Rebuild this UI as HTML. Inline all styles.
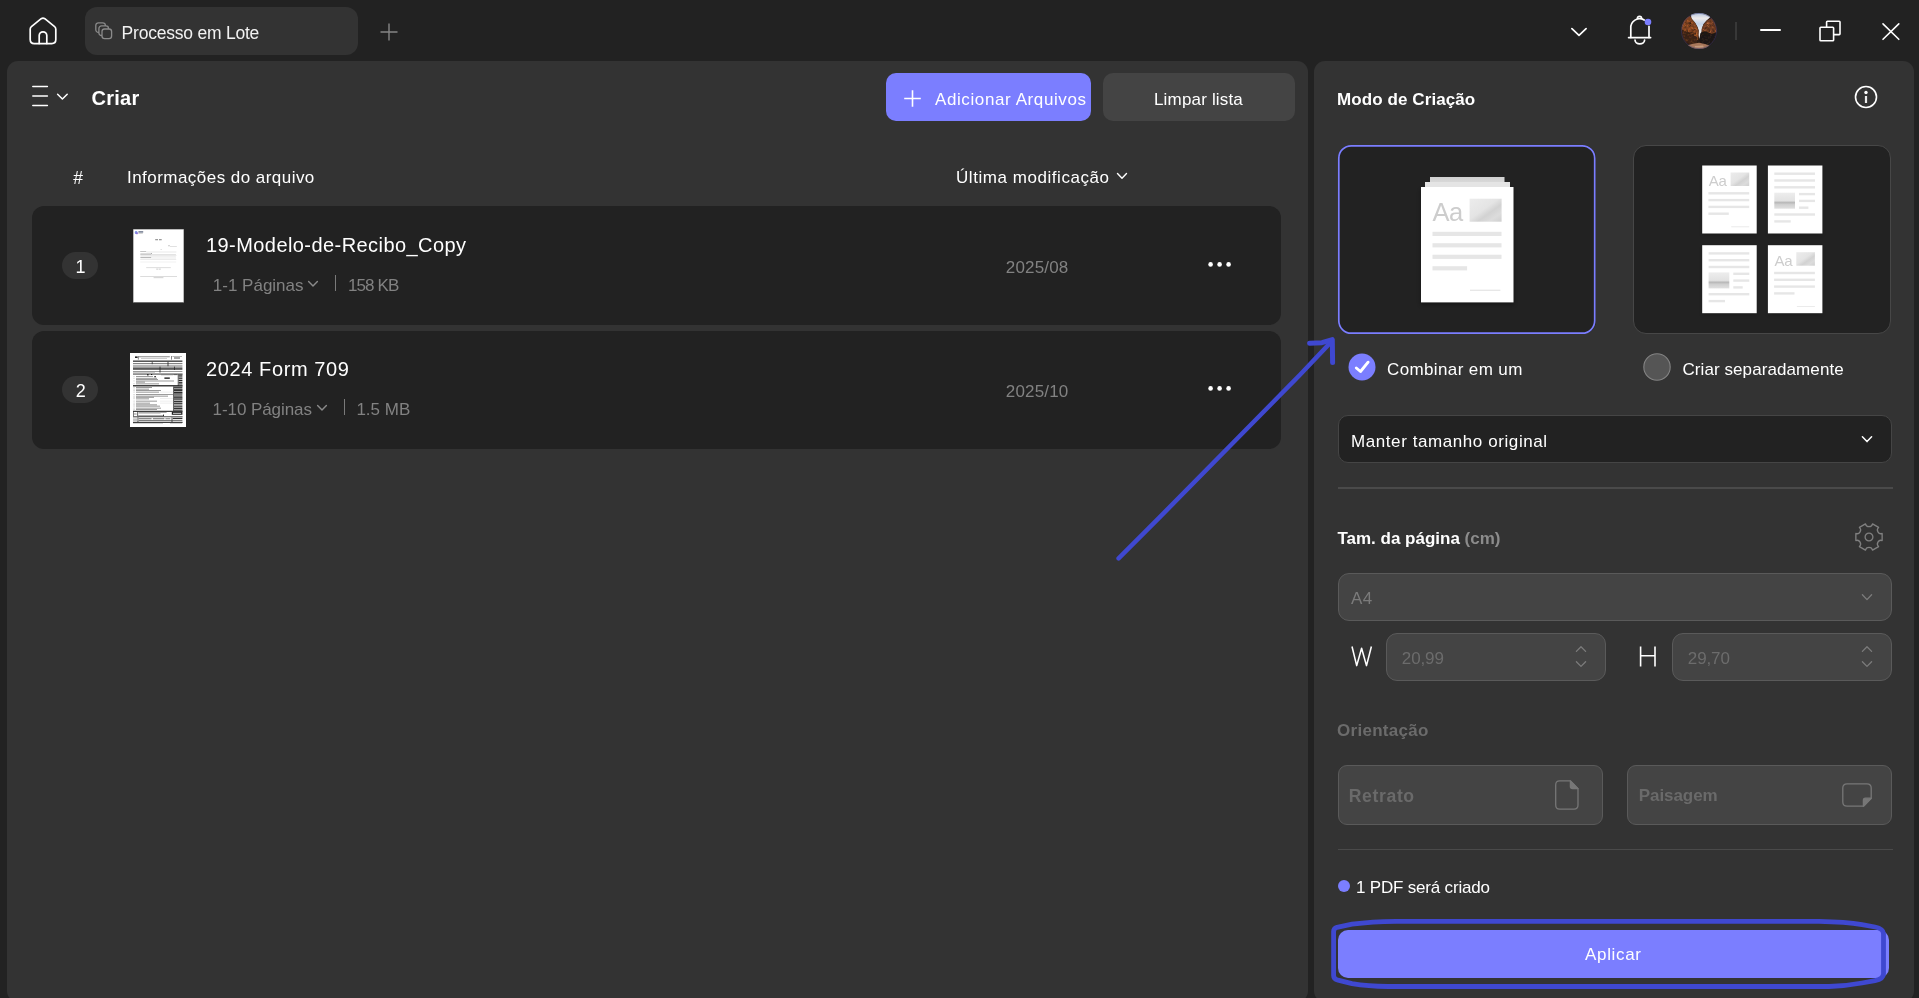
<!DOCTYPE html>
<html lang="pt">
<head>
<meta charset="utf-8">
<title>Processo em Lote</title>
<style>
*{box-sizing:border-box;margin:0;padding:0}
html,body{width:1919px;height:998px;overflow:hidden;background:#222222}
body{font-family:"Liberation Sans",sans-serif;color:#fff;position:relative;font-size:17px}
.abs{position:absolute}
.t{position:absolute;white-space:nowrap;line-height:20px;height:20px}
.b{font-weight:bold}
svg{position:absolute;overflow:visible}
/* top bar */
#tab{left:85px;top:7px;width:273px;height:47.7px;background:#333333;border-radius:12px}
/* panels */
#left{left:7px;top:60.8px;width:1300.7px;height:941.5px;background:#333333;border-radius:11px}
#right{left:1314px;top:60.8px;width:599.5px;height:941.5px;background:#333333;border-radius:11px}
.btn{border-radius:10px}
#add{left:886.2px;top:73px;width:205.2px;height:48px;background:#7b7eff}
#clear{left:1103.4px;top:73px;width:191.8px;height:48px;background:#444444}
.row{left:32.2px;width:1248.8px;height:118.6px;background:#222222;border-radius:12px}
.badge{left:62.2px;width:36px;height:27px;border-radius:13.5px;background:#333333}
.gray{color:#828282}
.card{width:257.5px;height:189px;background:#222222;border-radius:13px}
.dis{background:#444444;border:1px solid #5a5a5a;border-radius:11px}
.hr{height:2px;background:#4a4a4a;left:1338px;width:555px}
</style>
</head>
<body><div id="wrap" style="position:absolute;left:0;top:0;width:1919px;height:998px;will-change:transform">
<!-- TOP BAR -->
<div id="tab" class="abs"></div>
<div class="t" style="left:121.6px;top:23.4px;color:#f2f2f2;font-size:17.5px;letter-spacing:-.22px">Processo em Lote</div>


<!-- home -->
<svg style="left:29px;top:17px" width="28" height="28" viewBox="0 0 28 28" fill="none" stroke="#fff" stroke-width="1.7" stroke-linejoin="round" stroke-linecap="round">
<path d="M1.2 12.2 Q1.2 10.6 2.4 9.6 L12.2 1.7 Q14 0.4 15.8 1.7 L25.6 9.6 Q26.8 10.6 26.8 12.2 V22.6 Q26.8 26.6 22.8 26.6 H5.2 Q1.2 26.6 1.2 22.6 Z"/>
<path d="M10.2 26.4 V18.6 A3.8 3.8 0 0 1 17.8 18.6 V26.4"/>
</svg>
<!-- stack icon -->
<svg style="left:95px;top:22px" width="18" height="18" viewBox="0 0 18 18" fill="#333333" stroke="#8a8a8a" stroke-width="1.3">
<rect x="0.8" y="0.8" width="9.6" height="9.6" rx="2.6"/>
<rect x="3.9" y="3.9" width="9.6" height="9.6" rx="2.6"/>
<rect x="7" y="7" width="9.6" height="9.6" rx="2.6"/>
</svg>
<!-- plus tab -->
<svg style="left:380.2px;top:22.6px" width="18" height="18" viewBox="0 0 18 18" fill="none" stroke="#858585" stroke-width="1.4"><path d="M9 0.5V17.5M0.5 9H17.5"/></svg>
<!-- chevron down top -->
<svg style="left:1570px;top:26px" width="18" height="12" viewBox="0 0 18 12" fill="none" stroke="#fff" stroke-width="1.7" stroke-linecap="round" stroke-linejoin="round"><path d="M1.9 2.7 L9 9.3 L16.1 2.7"/></svg>
<!-- bell -->
<svg style="left:1626px;top:14px" width="28" height="32" viewBox="0 0 28 32" fill="none" stroke="#fff" stroke-width="1.7" stroke-linecap="round">
<path d="M2.6 23.6 H24.6"/>
<path d="M4.8 23.4 V14.4 A8.9 8.9 0 0 1 18.2 6.0"/>
<path d="M23 12.4 V23.4"/>
<path d="M11.4 4.4 A2.1 2.1 0 0 1 15.6 4.4"/>
<path d="M9 26 A4.8 3.9 0 0 0 18.6 26"/>
<circle cx="22" cy="8" r="3.3" fill="#7b7eff" stroke="none"/>
</svg>
<!-- avatar -->
<svg style="left:1681px;top:13px" width="36" height="36" viewBox="0 0 36 36">
<defs><clipPath id="av"><circle cx="18" cy="18" r="18"/></clipPath>
<linearGradient id="sky" x1="0" y1="0" x2="0" y2="1"><stop offset="0" stop-color="#b4c4dc"/><stop offset="0.2" stop-color="#eeeaea"/><stop offset="0.42" stop-color="#c3d2e8"/><stop offset="0.7" stop-color="#f0eeee"/><stop offset="1" stop-color="#e6e0dc"/></linearGradient>
<filter id="avn" x="0" y="0" width="100%" height="100%"><feTurbulence type="fractalNoise" baseFrequency="0.42" numOctaves="2" seed="11" result="n"/><feColorMatrix in="n" type="matrix" values="0 0 0 0 0  0 0 0 0 0  0 0 0 0 0  2.4 0 0 0 -1.15" result="a"/><feComposite in="SourceGraphic" in2="a" operator="in"/></filter>
<filter id="avb"><feGaussianBlur stdDeviation="0.55"/></filter>
</defs>
<g clip-path="url(#av)">
<rect width="36" height="36" fill="#2a1b14"/>
<g filter="url(#avb)">
<path d="M9.6 0 H30 L29 4.5 L25.5 7.5 L22.5 11 L21 15.5 L20.4 19 L19 22.5 L18.4 26 L17.4 22 L17.8 17.5 L16.6 14 L14 9.5 L10.5 5.5 Z" fill="url(#sky)"/>
<path d="M2 9 L6 4 L9 3 L11.5 7 L14.5 10.5 L16.4 14.5 L17.6 18 L17.4 23 L17 27 L14 27 L6 20 L0.5 17 Z" fill="#7d4320"/>
<path d="M31 5 L33.5 9 L35.6 15 L35.5 20 L30 22 L25 18 L21 19 L20.6 16 L22.5 11.5 L26 7.5 Z" fill="#6e3b22"/>
<path d="M0 16 L6 19 L13 21 L16.5 25 L16 31 L8 31 L2 26 Z" fill="#3a2115"/>
<path d="M19.5 20 L25 18.5 L31 21 L36 19 L35 27 L30 33 L21 32 L18.6 27 Z" fill="#1c1613"/>
<path d="M6.5 32.2 L12 30.8 L18 29.8 L24 31 L28.5 32.6 L25 36 H11 Z" fill="#a8775a"/>
<path d="M14 33 L22 32.6 L23 34.4 L13.4 34.6Z" fill="#c49a7e"/>
</g>
<g filter="url(#avn)">
<path d="M1 9 L7.5 4.5 L12.5 10 L15.8 15 L17 21 L17 27 L8 24 L0 18 Z" fill="#cf6c2c"/>
<path d="M31.5 6.5 L36 14 L34 21 L24 18.5 L21.4 17.5 L23 12.5 L27 8.5 Z" fill="#c06a3c"/>
<path d="M0 16 L16 24 L16 31 L4 29 Z" fill="#6b3a1c"/>
<path d="M20 21 L35 20 L31 32 L21 31 Z" fill="#3d2a1e"/>
</g>
<g filter="url(#avn)" transform="translate(36,0) scale(-1,1)">
<path d="M0 8 L5 6.5 L12.5 14 L15 22 L6 22 L0 18 Z" fill="#2c1a12" opacity=".95"/>
<path d="M23 11 L30 5 L35 16 L30 24 L19.4 22 Z" fill="#2e1a10" opacity=".95"/>
</g>
</g>
<circle cx="18" cy="18" r="17.6" fill="none" stroke="#3b3f78" stroke-width=".7" opacity=".7"/>
</svg>
<div class="abs" style="left:1735px;top:22px;width:2px;height:18px;background:#383838"></div>
<!-- minimize -->
<div class="abs" style="left:1760px;top:29.1px;width:20.6px;height:1.7px;background:#fff;border-radius:1px"></div>
<!-- restore -->
<svg style="left:1818px;top:19px" width="24" height="24" viewBox="0 0 24 24" fill="#222222" stroke="#fff" stroke-width="1.6" stroke-linejoin="round">
<rect x="8.6" y="2.2" width="13.4" height="13.4" rx="0.8"/>
<rect x="2" y="8.2" width="13.6" height="13.6" rx="0.8"/>
</svg>
<!-- close -->
<svg style="left:1881px;top:22px" width="20" height="19" viewBox="0 0 20 19" fill="none" stroke="#fff" stroke-width="1.6" stroke-linecap="round"><path d="M2 1.9 L17.8 17.3 M17.8 1.9 L2 17.3"/></svg>

<!-- PANELS -->
<div id="left" class="abs"></div>
<div id="right" class="abs"></div>

<!-- LEFT HEADER -->
<div class="t b" style="left:91.4px;top:87.4px;font-size:20px;line-height:22px;height:22px;letter-spacing:.3px">Criar</div>
<div id="add" class="abs btn"></div>
<div class="t" style="left:935px;top:89.8px;letter-spacing:.6px">Adicionar Arquivos</div>
<div id="clear" class="abs btn"></div>
<div class="t" style="left:1154px;top:89.8px;letter-spacing:.17px">Limpar lista</div>

<div class="t" style="left:73.2px;top:167.8px;font-size:17.5px">#</div>
<div class="t" style="left:127px;top:167.7px;letter-spacing:.46px">Informações do arquivo</div>
<div class="t" style="left:956px;top:167.7px;letter-spacing:.55px">Última modificação</div>


<!-- menu icon -->
<svg style="left:32px;top:85px" width="38" height="22" viewBox="0 0 38 22" fill="none" stroke="#fff" stroke-width="1.5" stroke-linecap="round">
<path d="M0.8 1.6 H15.4 M0.8 11 H15.4 M0.8 20.4 H15.4"/>
<path d="M25.6 9.2 L30.4 14 L35.2 9.2" stroke-linejoin="round"/>
</svg>
<!-- plus in add button -->
<svg style="left:904px;top:90px" width="17" height="17" viewBox="0 0 17 17" fill="none" stroke="#fff" stroke-width="1.6"><path d="M8.5 0.2V16.8M0.2 8.5H16.8"/></svg>
<!-- chevron ultima -->
<svg style="left:1116.2px;top:171.6px" width="12" height="8" viewBox="0 0 12 8" fill="none" stroke="#fff" stroke-width="1.4" stroke-linecap="round" stroke-linejoin="round"><path d="M1.5 1.6 L6 6.2 L10.5 1.6"/></svg>

<!-- ROWS -->
<div class="abs row" style="top:206px"></div>
<div class="abs row" style="top:330.6px;height:118.7px"></div>
<div class="abs badge" style="top:251.5px"></div>
<div class="abs badge" style="top:376px"></div>
<div class="t" style="left:75.4px;top:256.8px;font-size:18px">1</div>
<div class="t" style="left:75.8px;top:381.2px;font-size:18px">2</div>
<svg style="left:133px;top:229px" width="51" height="74" viewBox="0 0 51 74">
<rect x="0" y="0" width="51" height="73.5" fill="#fff"/>
<rect x="0.25" y="0.25" width="50.5" height="73" fill="none" stroke="#1a1a1a" stroke-width="0.5" opacity=".6"/>
<rect x="1.8" y="1.9" width="2.6" height="3" rx="1.2" fill="#6f8be0" opacity=".9"/>
<rect x="2.6" y="3.2" width="2.6" height="2" rx="1" fill="#8a6ad8" opacity=".8"/>
<rect x="5.4" y="2.2" width="4.8" height="1.4" fill="#44506a" opacity=".8"/>
<rect x="5.4" y="4" width="4.4" height=".7" fill="#999" opacity=".6"/>
<rect x="22.2" y="10.3" width="2.8" height=".9" fill="#333" opacity=".7"/><rect x="26" y="10.3" width="2.7" height=".9" fill="#333" opacity=".7"/>
<rect x="35.2" y="16.4" width="1.6" height=".8" fill="#888" opacity=".7"/><rect x="37" y="17.3" width="6.8" height=".45" fill="#aaa" opacity=".8"/>
<rect x="27.5" y="20.4" width="1.4" height=".6" fill="#aaa" opacity=".6"/>
<rect x="7.2" y="22.2" width="6" height=".8" fill="#999" opacity=".7"/><rect x="13.4" y="22.8" width="30" height=".4" fill="#c8c8c8"/>
<rect x="7.4" y="24.6" width="10.6" height=".9" fill="#888" opacity=".75"/><rect x="18" y="24" width="1" height="1" fill="#777" opacity=".6"/><rect x="7.4" y="25.6" width="35.6" height=".4" fill="#c4c4c4"/>
<path d="M7.4 26.2 H42.6 Q43.6 26.7 42.6 27.2 H7.4" fill="none" stroke="#c8c8c8" stroke-width=".4"/>
<rect x="7.4" y="28.2" width="10.8" height=".9" fill="#888" opacity=".75"/><rect x="18.4" y="28.8" width="24.6" height=".4" fill="#c8c8c8"/>
<rect x="7.2" y="30.4" width="36" height=".45" fill="#d2d2d2"/>
<rect x="7.2" y="32.8" width="36" height=".4" fill="#dcdcdc"/>
<rect x="13.2" y="38.6" width="24.6" height=".45" fill="#b4b4b4"/>
<rect x="23.2" y="39.7" width="2" height=".8" fill="#999" opacity=".6"/><rect x="25.8" y="39.7" width="2" height=".8" fill="#999" opacity=".6"/>
<rect x="7.2" y="47.5" width="36.8" height=".45" fill="#b0b0b0"/>
<rect x="20.6" y="48.4" width="9.8" height=".7" fill="#999" opacity=".65"/>
</svg>
<svg style="left:130px;top:353px" width="56" height="74" viewBox="0 0 56 74"><rect x="0" y="0" width="56" height="74" fill="#fff"/><rect x="5.0" y="3.4" width="2.6" height="1.6" fill="#222"/><rect x="7.9" y="3.0" width="0.6" height="3.6" fill="#333"/><rect x="8.8" y="3.4" width="31.0" height="0.8" fill="#555" opacity="0.85"/><rect x="11.0" y="5.2" width="26.0" height="0.6" fill="#888" opacity="0.7"/><rect x="41.2" y="3.0" width="0.6" height="3.6" fill="#333"/><rect x="42.4" y="3.2" width="9.6" height="0.6" fill="#666" opacity="0.8"/><rect x="44.0" y="4.4" width="6.0" height="1.2" fill="#444" opacity="0.8"/><rect x="3.0" y="7.6" width="49.4" height="1.1" fill="#111"/><rect x="3.0" y="10.4" width="49.4" height="0.7" fill="#333"/><rect x="3.0" y="12.6" width="49.4" height="0.8" fill="#444"/><rect x="3.0" y="14.4" width="49.4" height="1.6" fill="#3c3c3c" opacity="0.85"/><rect x="3.0" y="16.2" width="49.4" height="0.7" fill="#333"/><rect x="3.0" y="18.4" width="49.4" height="0.6" fill="#555"/><rect x="3.0" y="19.4" width="22.0" height="0.6" fill="#888" opacity="0.7"/><rect x="21.8" y="8.8" width="0.7" height="2.4" fill="#222"/><rect x="37.6" y="8.8" width="0.8" height="4.4" fill="#222"/><rect x="29.6" y="13.6" width="0.8" height="6.0" fill="#222"/><rect x="44.2" y="13.6" width="0.7" height="3.4" fill="#222"/><rect x="3.0" y="20.6" width="49.6" height="0.9" fill="#222"/><rect x="17.0" y="21.2" width="1.6" height="1.2" fill="#111"/><rect x="21.0" y="21.0" width="1.2" height="1.0" fill="#111"/><rect x="24.4" y="23.0" width="1.4" height="1.3" fill="#111"/><rect x="31.0" y="21.6" width="12.0" height="0.6" fill="#666" opacity="0.8"/><rect x="43.6" y="21.4" width="3.6" height="0.7" fill="#3a3a3a" opacity="0.85"/><rect x="34.4" y="24.4" width="5.4" height="1.5" fill="#1c1c1c" opacity="0.9"/><rect x="6.0" y="23.2" width="17.0" height="0.6" fill="#3c3c3c" opacity="0.85"/><rect x="6.0" y="24.9" width="21.0" height="0.6" fill="#3c3c3c" opacity="0.85"/><rect x="6.0" y="26.4" width="22.0" height="0.6" fill="#3c3c3c" opacity="0.85"/><rect x="6.0" y="27.7" width="38.0" height="0.6" fill="#3c3c3c" opacity="0.85"/><rect x="6.0" y="28.8" width="9.0" height="0.6" fill="#3c3c3c" opacity="0.85"/><rect x="6.0" y="30.6" width="23.0" height="0.6" fill="#3c3c3c" opacity="0.85"/><rect x="3.4" y="23.2" width="1.2" height="0.5" fill="#777" opacity="0.7"/><rect x="3.4" y="24.9" width="1.2" height="0.5" fill="#777" opacity="0.7"/><rect x="3.4" y="27.7" width="1.2" height="0.5" fill="#777" opacity="0.7"/><rect x="3.4" y="30.6" width="1.2" height="0.5" fill="#777" opacity="0.7"/><rect x="47.8" y="21.4" width="0.7" height="11.4" fill="#222"/><rect x="48.6" y="21.6" width="3.8" height="1.1" fill="#1a1a1a" opacity="0.95"/><rect x="48.6" y="23.4" width="3.8" height="1.1" fill="#1a1a1a" opacity="0.95"/><rect x="48.6" y="25.2" width="3.8" height="1.1" fill="#1a1a1a" opacity="0.95"/><rect x="48.6" y="27.0" width="3.8" height="1.1" fill="#1a1a1a" opacity="0.95"/><rect x="48.6" y="28.8" width="3.8" height="1.1" fill="#1a1a1a" opacity="0.95"/><rect x="48.6" y="30.4" width="3.8" height="1.1" fill="#1a1a1a" opacity="0.95"/><rect x="3.0" y="32.2" width="49.6" height="1.2" fill="#111"/><rect x="6.0" y="34.2" width="16.0" height="0.6" fill="#3a3a3a" opacity="0.85"/><rect x="3.4" y="34.2" width="1.3" height="0.5" fill="#777" opacity="0.7"/><rect x="6.0" y="35.8" width="13.0" height="0.6" fill="#3a3a3a" opacity="0.85"/><rect x="3.4" y="35.8" width="1.3" height="0.5" fill="#777" opacity="0.7"/><rect x="6.0" y="37.0" width="25.0" height="0.6" fill="#3a3a3a" opacity="0.85"/><rect x="3.4" y="37.0" width="1.3" height="0.5" fill="#777" opacity="0.7"/><rect x="6.0" y="38.8" width="23.0" height="0.6" fill="#3a3a3a" opacity="0.85"/><rect x="3.4" y="38.8" width="1.3" height="0.5" fill="#777" opacity="0.7"/><rect x="6.0" y="41.0" width="37.0" height="0.6" fill="#3a3a3a" opacity="0.85"/><rect x="3.4" y="41.0" width="1.3" height="0.5" fill="#777" opacity="0.7"/><rect x="6.0" y="42.8" width="32.0" height="0.6" fill="#3a3a3a" opacity="0.85"/><rect x="3.4" y="42.8" width="1.3" height="0.5" fill="#777" opacity="0.7"/><rect x="6.0" y="43.9" width="18.0" height="0.6" fill="#3a3a3a" opacity="0.85"/><rect x="3.4" y="43.9" width="1.3" height="0.5" fill="#777" opacity="0.7"/><rect x="6.0" y="45.6" width="13.0" height="0.6" fill="#3a3a3a" opacity="0.85"/><rect x="3.4" y="45.6" width="1.3" height="0.5" fill="#777" opacity="0.7"/><rect x="6.0" y="47.8" width="21.0" height="0.6" fill="#3a3a3a" opacity="0.85"/><rect x="3.4" y="47.8" width="1.3" height="0.5" fill="#777" opacity="0.7"/><rect x="6.0" y="49.8" width="14.0" height="0.6" fill="#3a3a3a" opacity="0.85"/><rect x="3.4" y="49.8" width="1.3" height="0.5" fill="#777" opacity="0.7"/><rect x="6.0" y="51.6" width="21.0" height="0.6" fill="#3a3a3a" opacity="0.85"/><rect x="3.4" y="51.6" width="1.3" height="0.5" fill="#777" opacity="0.7"/><rect x="6.0" y="52.8" width="24.0" height="0.6" fill="#3a3a3a" opacity="0.85"/><rect x="3.4" y="52.8" width="1.3" height="0.5" fill="#777" opacity="0.7"/><rect x="6.0" y="54.8" width="25.0" height="0.6" fill="#3a3a3a" opacity="0.85"/><rect x="3.4" y="54.8" width="1.3" height="0.5" fill="#777" opacity="0.7"/><rect x="6.0" y="56.0" width="21.0" height="0.6" fill="#3a3a3a" opacity="0.85"/><rect x="3.4" y="56.0" width="1.3" height="0.5" fill="#777" opacity="0.7"/><rect x="30.0" y="38.9" width="13.0" height="0.3" fill="#aaa" opacity="0.6"/><rect x="30.0" y="41.1" width="13.0" height="0.3" fill="#aaa" opacity="0.6"/><rect x="30.0" y="45.7" width="13.0" height="0.3" fill="#aaa" opacity="0.6"/><rect x="30.0" y="47.9" width="13.0" height="0.3" fill="#aaa" opacity="0.6"/><rect x="30.0" y="49.9" width="13.0" height="0.3" fill="#aaa" opacity="0.6"/><rect x="43.2" y="33.4" width="0.7" height="24.6" fill="#222"/><rect x="44.0" y="33.6" width="8.4" height="1.3" fill="#1c1c1c" opacity="0.9"/><rect x="44.0" y="35.3" width="8.4" height="1.3" fill="#5a5a5a" opacity="0.9"/><rect x="44.0" y="37.0" width="8.4" height="1.3" fill="#1c1c1c" opacity="0.9"/><rect x="44.0" y="38.8" width="8.4" height="1.3" fill="#1c1c1c" opacity="0.9"/><rect x="44.0" y="40.6" width="8.4" height="1.3" fill="#5a5a5a" opacity="0.9"/><rect x="44.0" y="42.4" width="8.4" height="1.3" fill="#1c1c1c" opacity="0.9"/><rect x="44.0" y="44.2" width="8.4" height="1.3" fill="#1c1c1c" opacity="0.9"/><rect x="44.0" y="46.0" width="8.4" height="1.3" fill="#5a5a5a" opacity="0.9"/><rect x="44.0" y="47.8" width="8.4" height="1.3" fill="#1c1c1c" opacity="0.9"/><rect x="44.0" y="49.6" width="8.4" height="1.3" fill="#1c1c1c" opacity="0.9"/><rect x="44.0" y="51.4" width="8.4" height="1.3" fill="#5a5a5a" opacity="0.9"/><rect x="44.0" y="53.2" width="8.4" height="1.3" fill="#1c1c1c" opacity="0.9"/><rect x="44.0" y="55.0" width="8.4" height="1.3" fill="#1c1c1c" opacity="0.9"/><rect x="44.0" y="56.6" width="8.4" height="1.3" fill="#5a5a5a" opacity="0.9"/><rect x="44.0" y="36.2" width="8.4" height="0.6" fill="#111"/><rect x="44.0" y="39.8" width="8.4" height="0.6" fill="#111"/><rect x="44.0" y="44.8" width="8.4" height="0.5" fill="#111"/><rect x="3.0" y="57.8" width="49.6" height="1.0" fill="#111"/><rect x="3.0" y="58.6" width="0.6" height="4.6" fill="#222"/><rect x="7.4" y="58.6" width="0.7" height="4.6" fill="#222"/><rect x="4.0" y="60.4" width="2.6" height="0.5" fill="#777" opacity="0.8"/><rect x="4.0" y="61.4" width="2.6" height="0.5" fill="#777" opacity="0.8"/><rect x="8.6" y="59.4" width="28.0" height="0.5" fill="#3c3c3c" opacity="0.85"/><rect x="8.6" y="60.4" width="22.0" height="0.5" fill="#777" opacity="0.7"/><rect x="41.8" y="58.8" width="10.6" height="3.0" fill="#222"/><rect x="43.0" y="59.8" width="8.2" height="1.1" fill="#ddd" opacity="0.85"/><rect x="8.2" y="62.6" width="25.0" height="0.7" fill="#333"/><rect x="33.0" y="61.6" width="0.9" height="1.6" fill="#111"/><rect x="3.0" y="63.4" width="49.6" height="0.8" fill="#222"/><rect x="3.0" y="64.8" width="4.0" height="0.5" fill="#666" opacity="0.8"/><rect x="3.0" y="66.2" width="4.0" height="0.5" fill="#666" opacity="0.8"/><rect x="3.0" y="67.4" width="4.0" height="0.5" fill="#666" opacity="0.8"/><rect x="7.6" y="64.2" width="0.7" height="4.8" fill="#222"/><rect x="8.6" y="65.4" width="13.0" height="0.8" fill="#2a2a2a" opacity="0.9"/><rect x="22.8" y="65.4" width="11.6" height="0.8" fill="#2a2a2a" opacity="0.9"/><rect x="35.4" y="65.4" width="5.0" height="0.8" fill="#3a3a3a" opacity="0.85"/><rect x="41.6" y="64.4" width="0.8" height="4.6" fill="#222"/><rect x="42.8" y="64.8" width="9.6" height="1.3" fill="#1c1c1c" opacity="0.9"/><rect x="8.6" y="67.2" width="43.8" height="0.7" fill="#444"/><rect x="3.0" y="68.8" width="49.6" height="1.0" fill="#111"/><rect x="3.0" y="70.2" width="30.0" height="0.5" fill="#888" opacity="0.7"/><rect x="40.0" y="70.2" width="12.0" height="0.5" fill="#888" opacity="0.7"/></svg>
<div class="t" style="left:206px;top:233px;font-size:20px;line-height:24px;height:24px;letter-spacing:.43px">19-Modelo-de-Recibo_Copy</div>
<div class="t" style="left:206px;top:357px;font-size:20px;line-height:24px;height:24px;letter-spacing:.61px">2024 Form 709</div>
<div class="t gray" style="left:212.8px;top:275.6px">1-1 Páginas</div>
<div class="t gray" style="left:348px;top:275.6px;letter-spacing:-.9px">158 KB</div>
<div class="t gray" style="left:212.6px;top:400.1px;letter-spacing:-.08px">1-10 Páginas</div>
<div class="t gray" style="left:356.4px;top:400.1px">1.5 MB</div>
<div class="t gray" style="left:1005.8px;top:258px;letter-spacing:.16px">2025/08</div>
<div class="t gray" style="left:1005.8px;top:382.4px;letter-spacing:.16px">2025/10</div>


<!-- row chevrons / separators / dots -->
<svg style="left:307px;top:280px" width="12" height="8" viewBox="0 0 12 8" fill="none" stroke="#8a8a8a" stroke-width="1.4" stroke-linecap="round" stroke-linejoin="round"><path d="M1.6 1.4 L6 6 L10.4 1.4"/></svg>
<svg style="left:316px;top:404px" width="12" height="8" viewBox="0 0 12 8" fill="none" stroke="#8a8a8a" stroke-width="1.4" stroke-linecap="round" stroke-linejoin="round"><path d="M1.6 1.4 L6 6 L10.4 1.4"/></svg>
<div class="abs" style="left:335px;top:275px;width:1px;height:16px;background:#7a7a7a"></div>
<div class="abs" style="left:344px;top:399px;width:1px;height:16px;background:#7a7a7a"></div>
<svg style="left:1207px;top:260px" width="26" height="9" viewBox="0 0 26 9" fill="#fff"><circle cx="3.6" cy="4.4" r="2.3"/><circle cx="12.6" cy="4.4" r="2.3"/><circle cx="21.6" cy="4.4" r="2.3"/></svg>
<svg style="left:1207px;top:384px" width="26" height="9" viewBox="0 0 26 9" fill="#fff"><circle cx="3.6" cy="4.4" r="2.3"/><circle cx="12.6" cy="4.4" r="2.3"/><circle cx="21.6" cy="4.4" r="2.3"/></svg>

<!-- RIGHT -->
<div class="t b" style="left:1337px;top:89.5px;letter-spacing:.09px">Modo de Criação</div>
<div class="abs card" style="left:1338px;top:145px"></div><svg style="left:1338px;top:145px" width="258" height="189" viewBox="0 0 258 189"><rect x="0.8" y="0.8" width="255.9" height="187.4" rx="12.4" fill="none" stroke="#7b7eff" stroke-width="1.7"/></svg>
<div class="abs card" style="left:1633px;top:145px;border:1px solid #474747"></div>

<svg style="left:0;top:0" width="1919" height="998" viewBox="0 0 1919 998">
<defs>
<linearGradient id="imgA" x1="0" y1="0" x2="1" y2="1"><stop offset="0" stop-color="#ececec"/><stop offset=".45" stop-color="#e4e4e4"/><stop offset=".62" stop-color="#d2d2d2"/><stop offset=".8" stop-color="#dcdcdc"/><stop offset="1" stop-color="#cfcfcf"/></linearGradient>
<linearGradient id="imgB" x1="0" y1="0" x2="0" y2="1"><stop offset="0" stop-color="#ededed"/><stop offset=".5" stop-color="#e2e2e2"/><stop offset=".62" stop-color="#b8b8b8"/><stop offset=".74" stop-color="#cfcfcf"/><stop offset="1" stop-color="#e0e0e0"/></linearGradient>
<linearGradient id="stk" x1="0" y1="0" x2="0" y2="1"><stop offset="0" stop-color="#d0d0d0"/><stop offset="1" stop-color="#e2e2e2"/></linearGradient>
<filter id="sh" x="-20%" y="-20%" width="140%" height="140%"><feGaussianBlur stdDeviation="2.2"/></filter>
</defs>
<!-- card1 stacked doc -->
<rect x="1421" y="190" width="92.5" height="115" fill="#000" opacity=".35" filter="url(#sh)"/>
<rect x="1430" y="177" width="74.5" height="12" fill="url(#stk)"/>
<rect x="1425" y="182" width="85" height="10" fill="#e4e4e4"/>
<rect x="1421" y="187" width="92.5" height="115.4" fill="#fff"/>
<text x="1432.4" y="220.8" font-family="Liberation Sans, sans-serif" font-size="25.5" fill="#cdcdcd" letter-spacing="-0.5">Aa</text>
<rect x="1469.6" y="198.7" width="32" height="23" fill="url(#imgA)"/>
<rect x="1432.5" y="231.8" width="69" height="4.2" fill="#e6e6e6"/>
<rect x="1432.5" y="243.2" width="69" height="4.2" fill="#e6e6e6"/>
<rect x="1432.5" y="254.7" width="69" height="4.2" fill="#e6e6e6"/>
<rect x="1432.5" y="266.2" width="34.6" height="4.2" fill="#e6e6e6"/>
<rect x="1470" y="289.7" width="30.4" height="1.1" fill="#e2e2e2"/>
<!-- card2 four pages -->
<g>
<rect x="1703" y="168" width="53" height="67" fill="#000" opacity=".22" filter="url(#sh)"/><rect x="1769" y="168" width="53" height="67" fill="#000" opacity=".22" filter="url(#sh)"/><rect x="1703" y="248" width="53" height="67" fill="#000" opacity=".22" filter="url(#sh)"/><rect x="1769" y="248" width="53" height="67" fill="#000" opacity=".22" filter="url(#sh)"/>
<rect x="1702.2" y="165.5" width="54.5" height="68.0" fill="#fff"/><text x="1708.8" y="185.8" font-family="Liberation Sans, sans-serif" font-size="15.0" fill="#cdcdcd" letter-spacing="-0.30">Aa</text><rect x="1730.6" y="172.5" width="18.6" height="13.5" fill="url(#imgA)"/><rect x="1708.4" y="192.1" width="40.8" height="2.4" fill="#e6e6e6"/><rect x="1708.4" y="198.9" width="40.8" height="2.4" fill="#e6e6e6"/><rect x="1708.4" y="205.7" width="40.8" height="2.4" fill="#e6e6e6"/><rect x="1708.4" y="212.5" width="20.4" height="2.4" fill="#e6e6e6"/><rect x="1731.2" y="226.5" width="18.0" height="0.7" fill="#e2e2e2"/><rect x="1767.9" y="165.5" width="54.5" height="68.0" fill="#fff"/><rect x="1774.3" y="172.5" width="40.7" height="2.4" fill="#e6e6e6"/><rect x="1774.3" y="179.3" width="40.7" height="2.4" fill="#e6e6e6"/><rect x="1774.3" y="186.1" width="40.7" height="2.4" fill="#e6e6e6"/><rect x="1774.3" y="192.7" width="20.7" height="16.0" fill="url(#imgB)"/><rect x="1799.0" y="192.9" width="16.0" height="2.4" fill="#e6e6e6"/><rect x="1799.0" y="199.7" width="16.0" height="2.4" fill="#e6e6e6"/><rect x="1799.0" y="206.5" width="9.4" height="2.4" fill="#e6e6e6"/><rect x="1774.3" y="213.3" width="40.7" height="2.4" fill="#e6e6e6"/><rect x="1774.3" y="220.2" width="16.4" height="2.4" fill="#e6e6e6"/><rect x="1702.2" y="245.2" width="54.5" height="68.0" fill="#fff"/><rect x="1708.6" y="252.2" width="40.7" height="2.4" fill="#e6e6e6"/><rect x="1708.6" y="259.0" width="40.7" height="2.4" fill="#e6e6e6"/><rect x="1708.6" y="265.8" width="40.7" height="2.4" fill="#e6e6e6"/><rect x="1708.6" y="272.4" width="20.7" height="16.0" fill="url(#imgB)"/><rect x="1733.3" y="272.6" width="16.0" height="2.4" fill="#e6e6e6"/><rect x="1733.3" y="279.4" width="16.0" height="2.4" fill="#e6e6e6"/><rect x="1733.3" y="286.2" width="9.4" height="2.4" fill="#e6e6e6"/><rect x="1708.6" y="293.0" width="40.7" height="2.4" fill="#e6e6e6"/><rect x="1708.6" y="299.9" width="16.4" height="2.4" fill="#e6e6e6"/><rect x="1767.9" y="245.2" width="54.5" height="68.0" fill="#fff"/><text x="1774.5" y="265.5" font-family="Liberation Sans, sans-serif" font-size="15.0" fill="#cdcdcd" letter-spacing="-0.30">Aa</text><rect x="1796.3" y="252.2" width="18.6" height="13.5" fill="url(#imgA)"/><rect x="1774.1" y="271.8" width="40.8" height="2.4" fill="#e6e6e6"/><rect x="1774.1" y="278.6" width="40.8" height="2.4" fill="#e6e6e6"/><rect x="1774.1" y="285.4" width="40.8" height="2.4" fill="#e6e6e6"/><rect x="1774.1" y="292.2" width="20.4" height="2.4" fill="#e6e6e6"/><rect x="1796.9" y="306.2" width="18.0" height="0.7" fill="#e2e2e2"/>
</g>
</svg>

<div class="t" style="left:1387px;top:359.6px;letter-spacing:.38px">Combinar em um</div>
<div class="t" style="left:1682.4px;top:359.6px;letter-spacing:.09px">Criar separadamente</div>
<div class="abs" style="left:1338px;top:415px;width:554px;height:47.5px;background:#222222;border:1px solid #454545;border-radius:10px"></div>
<div class="t" style="left:1351px;top:431.6px;letter-spacing:.58px">Manter tamanho original</div>
<div class="abs hr" style="top:487px"></div>
<div class="t b" style="left:1337.4px;top:528.5px">Tam. da página <span style="color:#8c8c8c">(cm)</span></div>
<div class="abs dis" style="left:1338px;top:573px;width:554.4px;height:47.6px"></div>
<div class="t" style="left:1351px;top:588.8px;color:#7b7b7b;letter-spacing:.4px">A4</div>
<div class="abs dis" style="left:1386.2px;top:633px;width:219.6px;height:47.7px"></div>
<div class="abs dis" style="left:1672.2px;top:633px;width:220.2px;height:47.7px"></div>
<div class="t" style="left:1401.8px;top:648.6px;color:#6c6c6c;letter-spacing:-.12px">20,99</div>
<div class="t" style="left:1687.8px;top:648.6px;color:#6c6c6c;letter-spacing:-.12px">29,70</div>
<div class="t b" style="left:1337px;top:720.7px;color:#6b6b6b;letter-spacing:.28px">Orientação</div>
<div class="abs dis" style="left:1338.3px;top:765px;width:264.6px;height:59.5px;border-radius:9px"></div>
<div class="abs dis" style="left:1627.2px;top:765px;width:265.3px;height:59.5px;border-radius:9px"></div>
<div class="t b" style="left:1348.8px;top:785.7px;color:#6a6a6a;font-size:17.6px;letter-spacing:.62px">Retrato</div>
<div class="t b" style="left:1638.8px;top:786.1px;color:#6a6a6a;letter-spacing:-.08px">Paisagem</div>
<div class="abs hr" style="top:849px;height:1px"></div>
<div class="abs" style="left:1337.8px;top:880.3px;width:12px;height:12px;border-radius:6px;background:#7b7eff"></div>
<div class="t" style="left:1356px;top:878.3px;letter-spacing:-.19px">1 PDF será criado</div>
<div class="abs btn" style="left:1338px;top:930px;width:551.4px;height:47.5px;background:#7b7eff"></div>
<div class="t" style="left:1585px;top:945.3px;letter-spacing:.67px">Aplicar</div>
<!-- info icon -->
<svg style="left:1854px;top:85px" width="24" height="24" viewBox="0 0 24 24" fill="none" stroke="#fff" stroke-width="1.6"><circle cx="12" cy="12" r="10.5"/><circle cx="12" cy="7.5" r="1.7" fill="#fff" stroke="none"/><path d="M12 11 V18" stroke-width="2.2" stroke="#ececec"/></svg>
<!-- radios -->
<svg style="left:1348px;top:353px" width="28" height="28" viewBox="0 0 28 28"><circle cx="14" cy="14" r="13.5" fill="#7b7eff"/><path d="M8.3 15 L12.5 18.5 L20.1 9.2" fill="none" stroke="#fff" stroke-width="2.9" stroke-linecap="round" stroke-linejoin="round"/></svg>
<svg style="left:1643px;top:353px" width="28" height="28" viewBox="0 0 28 28"><circle cx="14" cy="14" r="13.2" fill="#555555" stroke="#848484" stroke-width="1.1"/></svg>
<!-- dropdown chevron -->
<svg style="left:1861px;top:435px" width="12" height="9" viewBox="0 0 12 9" fill="none" stroke="#fff" stroke-width="1.5" stroke-linecap="round" stroke-linejoin="round"><path d="M1.4 1.8 L6 6.6 L10.6 1.8"/></svg>
<!-- gear -->
<svg style="left:1854px;top:522px" width="30" height="30" viewBox="-15 -15 30 30" fill="none" stroke="#808080" stroke-width="1.3" stroke-linejoin="round">
<path d="M13.14 -3.52 L13.14 3.52 A3.6 3.6 0 0 0 9.62 9.62 L3.52 13.14 A3.6 3.6 0 0 0 -3.52 13.14 L-9.62 9.62 A3.6 3.6 0 0 0 -13.14 3.52 L-13.14 -3.52 A3.6 3.6 0 0 0 -9.62 -9.62 L-3.52 -13.14 A3.6 3.6 0 0 0 3.52 -13.14 L9.62 -9.62 A3.6 3.6 0 0 0 13.14 -3.52 Z"/>
<circle cx="0" cy="0" r="3.9"/>
</svg>
<!-- A4 chevron -->
<svg style="left:1861px;top:593px" width="12" height="9" viewBox="0 0 12 9" fill="none" stroke="#7c7c7c" stroke-width="1.3" stroke-linecap="round" stroke-linejoin="round"><path d="M1.4 1.8 L6 6.6 L10.6 1.8"/></svg>
<!-- spinners -->
<svg style="left:1575px;top:645px" width="12" height="24" viewBox="0 0 12 24" fill="none" stroke="#7c7c7c" stroke-width="1.3" stroke-linecap="round" stroke-linejoin="round"><path d="M1.4 6.4 L6 1.8 L10.6 6.4 M1.4 16.8 L6 21.4 L10.6 16.8"/></svg>
<svg style="left:1861px;top:645px" width="12" height="24" viewBox="0 0 12 24" fill="none" stroke="#7c7c7c" stroke-width="1.3" stroke-linecap="round" stroke-linejoin="round"><path d="M1.4 6.4 L6 1.8 L10.6 6.4 M1.4 16.8 L6 21.4 L10.6 16.8"/></svg>
<!-- W / H thin letters -->
<svg style="left:1351px;top:646px" width="22" height="21" viewBox="0 0 22 21" fill="none" stroke="#fff" stroke-width="1.55" stroke-linejoin="round" stroke-linecap="butt"><path d="M1 0.5 L5.7 19.6 L10.6 2.2 L15.5 19.6 L20.4 0.5"/></svg>
<svg style="left:1639px;top:646px" width="18" height="21" viewBox="0 0 18 21" fill="none" stroke="#fff" stroke-width="1.6"><path d="M1.6 0.4 V20.4 M16 0.4 V20.4 M1.6 9.8 H16"/></svg>
<!-- portrait icon -->
<svg style="left:1555px;top:780px" width="24" height="30" viewBox="0 0 24 30" fill="none" stroke="#777" stroke-width="1.3" stroke-linejoin="round"><path d="M4.6 0.9 H15.4 L23 8.6 V25 Q23 29.1 19 29.1 H4.6 Q0.7 29.1 0.7 25 V5 Q0.7 0.9 4.6 0.9 Z"/><path d="M15.4 0.9 V6.6 Q15.4 8.6 17.4 8.6 H23 Z" fill="#777"/></svg>
<!-- landscape icon -->
<svg style="left:1842px;top:783px" width="30" height="24" viewBox="0 0 30 24" fill="none" stroke="#777" stroke-width="1.3" stroke-linejoin="round"><path d="M5 0.8 H25 Q29.2 0.8 29.2 5 V15.2 L21.4 23.2 H5 Q0.8 23.2 0.8 19 V5 Q0.8 0.8 5 0.8 Z"/><path d="M29.2 15.2 H23.4 Q21.4 15.2 21.4 17.2 V23.2 Z" fill="#777"/></svg>


<!-- annotations: arrow + hand drawn outline -->
<svg style="left:0;top:0" width="1919" height="998" viewBox="0 0 1919 998" fill="none" stroke="#3f48d0" stroke-linecap="round" stroke-linejoin="round">
<path d="M1118.6 558.4 L1158.8 518.2 L1229.4 446.5 L1299.8 375 L1331.4 341.6" stroke-width="4.5"/>
<path d="M1309.6 343.3 L1322 342.7 L1332.3 339.6 L1332.6 362.6" stroke-width="5"/>
<path d="M1333.6 932 Q1333.4 928.6 1337 927.3 L1352 924.2 Q1372 921.6 1396 921.4 H1819 Q1846 922 1862 924.6 L1875 927 Q1883.2 928.6 1883.5 933.5 V974 Q1883.2 979 1875 980.6 L1862 983 Q1846 986 1829 986.5 H1388 Q1368 986.2 1352 983.6 L1338 980.2 Q1333.6 979 1333.6 975.5 Z" stroke-width="4.8"/>
</svg>
</div></body>
</html>
